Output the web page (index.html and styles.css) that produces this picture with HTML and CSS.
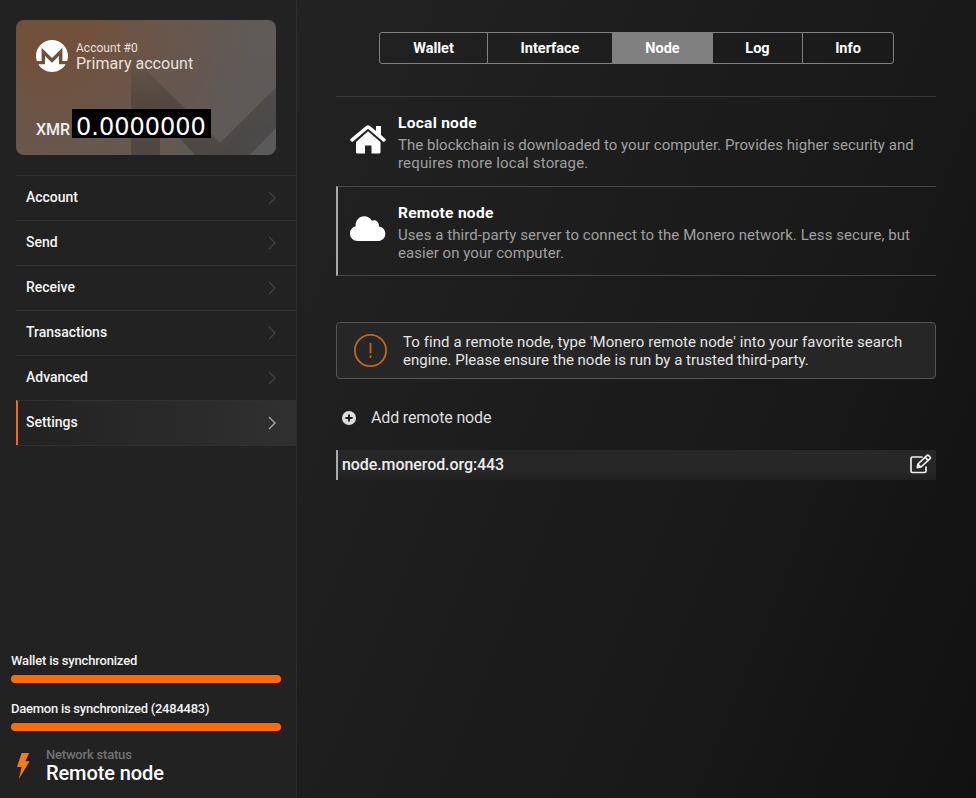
FILE: index.html
```html
<!DOCTYPE html>
<html lang="en">
<head>
<meta charset="utf-8">
<title>Monero wallet</title>
<link rel="stylesheet" href="styles.css">
</head>
<body>
<div class="app">
  <aside class="sidebar">
    <section class="card">
      <svg class="card-mark" viewBox="0 0 260 135"><defs><linearGradient id="fade" x1="0" y1="0" x2="0" y2="1"><stop offset="0" stop-color="#242424" stop-opacity="0"/><stop offset=".45" stop-color="#242424" stop-opacity=".85"/><stop offset="1" stop-color="#242424"/></linearGradient></defs><path d="M115 35L204 123L260 67V108L234 135H179L144 97V135H115Z" fill="url(#fade)"/></svg>
      <div class="account">
        <svg class="logo" viewBox="0 0 24 24"><path d="M12 0C5.365 0 0 5.373 0 12.015c0 1.335.228 2.607.618 3.81h3.577V5.729L12 13.545l7.805-7.815v10.095h3.577c.389-1.203.618-2.475.618-3.81C24 5.375 18.635 0 12 0zm-1.788 15.307l-3.417-3.421v6.351H1.758C3.87 21.689 7.678 24 12 24s8.162-2.311 10.245-5.764h-5.04v-6.351l-3.386 3.421-1.788 1.79-1.814-1.79h-.005z"/></svg>
        <div>
          <div class="account-index">Account #0</div>
          <div class="account-name">Primary account</div>
        </div>
      </div>
      <div class="balance"><span class="currency">XMR</span><span class="amount">0.0000000</span></div>
    </section>
    <nav class="menu">
      <a class="item">Account<svg viewBox="0 0 8 14"><path d="M1 1l6 6-6 6"/></svg></a>
      <a class="item">Send<svg viewBox="0 0 8 14"><path d="M1 1l6 6-6 6"/></svg></a>
      <a class="item">Receive<svg viewBox="0 0 8 14"><path d="M1 1l6 6-6 6"/></svg></a>
      <a class="item">Transactions<svg viewBox="0 0 8 14"><path d="M1 1l6 6-6 6"/></svg></a>
      <a class="item">Advanced<svg viewBox="0 0 8 14"><path d="M1 1l6 6-6 6"/></svg></a>
      <a class="item current">Settings<svg viewBox="0 0 8 14"><path d="M1 1l6 6-6 6"/></svg></a>
    </nav>
    <footer class="status">
      <div class="sync">Wallet is synchronized</div>
      <div class="bar"></div>
      <div class="sync daemon">Daemon is synchronized (2484483)</div>
      <div class="bar"></div>
      <div class="network">
        <svg class="bolt" viewBox="0 0 14 28"><path d="M5 0H13L9 9H13.5L2 28L5 15H0Z"/></svg>
        <div>
          <div class="network-label">Network status</div>
          <div class="network-value">Remote node</div>
        </div>
      </div>
    </footer>
  </aside>
  <main class="content">
    <div class="tabs">
      <div class="tab wallet">Wallet</div>
      <div class="tab interface">Interface</div>
      <div class="tab node">Node</div>
      <div class="tab log">Log</div>
      <div class="tab info">Info</div>
    </div>
    <section class="options">
      <div class="option">
        <svg class="home" viewBox="0 0 36 30"><path d="M26 1H31V10L35.5 14Q36.2 14.7 35.5 15.5L34.5 16.6Q33.8 17.2 33 16.5L18 3.7L3 16.5Q2.2 17.2 1.5 16.6L.5 15.5Q-.2 14.7 .5 14L16.3 .8Q18 -.5 19.7 .8L26 6Z"/><path d="M18 6.3L30.5 17V27Q30.5 28.5 29 28.5H21.5V20.5H15V28.5H7.5Q6 28.5 6 27V17Z"/></svg>
        <div>
          <h2>Local node</h2>
          <p><span class="local-1">The blockchain is downloaded to your computer. Provides higher security and</span><br><span class="local-2">requires more local storage.</span></p>
        </div>
      </div>
      <div class="option chosen">
        <svg class="cloud" viewBox="0 0 36 26"><path d="M8 25C3 25 0 21.8 0 17.5C0 14 2.3 11.2 5.6 10.3C5.3 4.3 9.2 .3 14.3 .3C17.5 .3 20.2 2 21.8 4.8C25.5 3 29.6 6 28.8 10.4C33 11 35.3 14 35.3 17.7C35.3 22 32 25 27.8 25Z"/></svg>
        <div>
          <h2>Remote node</h2>
          <p><span class="remote-1">Uses a third-party server to connect to the Monero network. Less secure, but</span><br><span class="remote-2">easier on your computer.</span></p>
        </div>
      </div>
    </section>
    <section class="notice">
      <svg viewBox="0 0 33 33"><circle cx="16.5" cy="16.5" r="15.6"/><path d="M16.5 9V19.2M16.5 21.5V24"/></svg>
      <p><span class="notice-1">To find a remote node, type 'Monero remote node' into your favorite search</span><br>engine. Please ensure the node is run by a trusted third-party.</p>
    </section>
    <div class="add">
      <svg viewBox="0 0 14 14"><circle cx="7" cy="7" r="7"/><path d="M7 3.4V10.6M3.4 7H10.6"/></svg>
      <span>Add remote node</span>
    </div>
    <div class="remote">
      <span>node.monerod.org:443</span>
      <svg viewBox="0 0 22 20"><path d="M12 3H2.5Q1 3 1 4.5V17Q1 18.5 2.5 18.5H14.5Q16 18.5 16 17V13"/><path d="M7.3 13.6L8 10L16.8 1.7Q17.7 .8 18.7 1.7L20 3Q20.8 3.9 20 4.7L11 13L7.3 13.6ZM15.2 3.4L18.3 6.4M8.3 10.5L10.6 12.8"/></svg>
    </div>
  </main>
</div>
</body>
</html>
```
FILE: styles.css
```css
* { box-sizing: border-box; }
body { margin: 0; font-family: Roboto, sans-serif; color: #fff; }
h2, p { margin: 0; }
svg { display: block; flex: none; }
.app { display: flex; width: 976px; height: 798px; overflow: hidden; background: #1b1b1b; }

.sidebar { display: flex; flex-direction: column; flex: none; width: 297px; padding-top: 20px; background: #222; border-right: 1px solid #2d2d2d; }
.card { position: relative; flex: none; width: 260px; height: 135px; margin-left: 16px; padding: 20px 20px 0; border-radius: 8px; overflow: hidden; background: radial-gradient(circle at 30px 0, #71503b 0, #70513d 50px, #68574c 125px, #5f5b58 210px, #5b5b5b 270px); }
.card-mark { position: absolute; inset: 0; width: 260px; height: 135px; opacity: .32; }
.account { position: relative; display: flex; gap: 8px; height: 69px; }
.logo { width: 32px; height: 32px; fill: #fff; }
.account-index { margin-top: 1px; font-size: 12px; line-height: 14px; letter-spacing: .03px; color: #e8e1dc; }
.account-name { font-size: 16px; line-height: 18px; letter-spacing: .03px; color: #e8e1dc; }
.balance { position: relative; display: flex; }
.currency { width: 36px; padding-top: 11px; font-size: 16px; line-height: 19px; font-weight: 500; color: #eee; }
.amount { width: 139px; height: 29px; padding-left: 4px; background: #000; font-family: "DejaVu Sans", sans-serif; font-size: 24px; line-height: 36px; letter-spacing: 0; }

.menu { margin: 20px 0 0 16px; border-bottom: 1px solid #303030; }
.item { display: flex; align-items: center; justify-content: space-between; height: 45px; padding: 0 20px 2px 10px; border-top: 1px solid #303030; font-size: 14px; line-height: 18px; letter-spacing: -.02px; font-weight: 500; color: #f4f4f4; }
.item svg { width: 8px; height: 14px; margin-top: 2px; fill: none; stroke: #424242; stroke-width: 1.3; }
.current { padding-left: 8px; border-left: 2px solid #f26c17; background: linear-gradient(90deg, #222, #303030); }
.current svg { stroke: #aaa; }

.status { margin-top: auto; height: 145px; padding-left: 11px; }
.sync { height: 22px; font-size: 13px; line-height: 15px; letter-spacing: -.18px; font-weight: 500; color: #f2f2f2; }
.daemon { letter-spacing: -.25px; }
.bar { width: 270px; height: 8px; margin-bottom: 18px; border-radius: 4px; background: #ff6c00; }
.network { display: flex; gap: 16px; padding-left: 6px; margin-top: -2px; }
.bolt { width: 13px; height: 28px; margin-top: 5px; fill: #f77b14; }
.network-label { font-size: 13px; line-height: 15px; letter-spacing: -.2px; font-weight: 500; color: #737373; }
.network-value { font-size: 20px; line-height: 23px; letter-spacing: -.1px; font-weight: 500; }

.content { flex: 1; padding: 32px 40px 0 39px; background: linear-gradient(112deg, #222 0, #1d1d1d 38%, #191919 65%, #111 100%); }
.tabs { display: flex; width: 515px; height: 32px; margin-left: 43px; border: 1px solid #808080; border-radius: 3px; }
.tab { border-right: 1px solid #808080; text-align: center; font-size: 14.5px; line-height: 31px; font-weight: 700; }
.wallet { width: 108px; }
.interface { width: 125px; }
.node { width: 100px; background: #808080; margin: -1px 0; line-height: 33px; }
.log { width: 90px; }
.info { flex: 1; border-right: 0; }
.options { margin-top: 32px; }
.option { display: flex; align-items: center; gap: 12px; height: 90px; padding: 2px 0 0 14px; border-top: 1px solid #393939; }
.chosen { padding-left: 12px; border-left: 2px solid #aaa; border-top: 1px solid #474747; border-bottom: 1px solid #474747; }
.home { width: 36px; height: 30px; margin-top: -6px; fill: #fff; }
.cloud { width: 36px; height: 26px; margin-top: -6px; fill: #fff; }
h2 { font-size: 15.5px; line-height: 20px; font-weight: 700; letter-spacing: .28px; margin-bottom: 3px; }
.option p { font-size: 15px; line-height: 18px; color: #a0a0a0; white-space: nowrap; }
.local-1 { letter-spacing: .02px; }
.local-2 { letter-spacing: .16px; }
.remote-1 { letter-spacing: .07px; }
.remote-2 { letter-spacing: .05px; }
.notice { display: flex; align-items: center; height: 57px; margin-top: 46px; padding-left: 17px; gap: 16px; border: 1px solid #555; border-radius: 4px; background: #262626; }
.notice svg { width: 33px; height: 33px; fill: none; stroke: #c5651d; stroke-width: 1.8; }
.notice p { font-size: 15px; line-height: 18px; white-space: nowrap; color: #e4e4e4; }
.notice-1 { letter-spacing: .07px; }
.add { display: flex; align-items: center; gap: 15px; height: 20px; margin: 29px 0 0 6px; font-size: 16px; letter-spacing: -.15px; color: #ddd; }
.add span { margin-top: -2px; }
.add svg { width: 14px; height: 14px; fill: #ddd; stroke: #222; stroke-width: 2; }
.add circle { stroke: none; }
.remote { display: flex; align-items: center; justify-content: space-between; height: 30px; margin-top: 22px; padding: 0 4px 2px 4px; border-left: 2px solid #aaa; background: linear-gradient(#272727 70%, #202020); font-size: 16px; letter-spacing: -.08px; font-weight: 500; color: #eee; }
.remote svg { width: 22px; height: 20px; fill: none; stroke: #eee; stroke-width: 1.7; stroke-linejoin: round; stroke-linecap: round; }
```
